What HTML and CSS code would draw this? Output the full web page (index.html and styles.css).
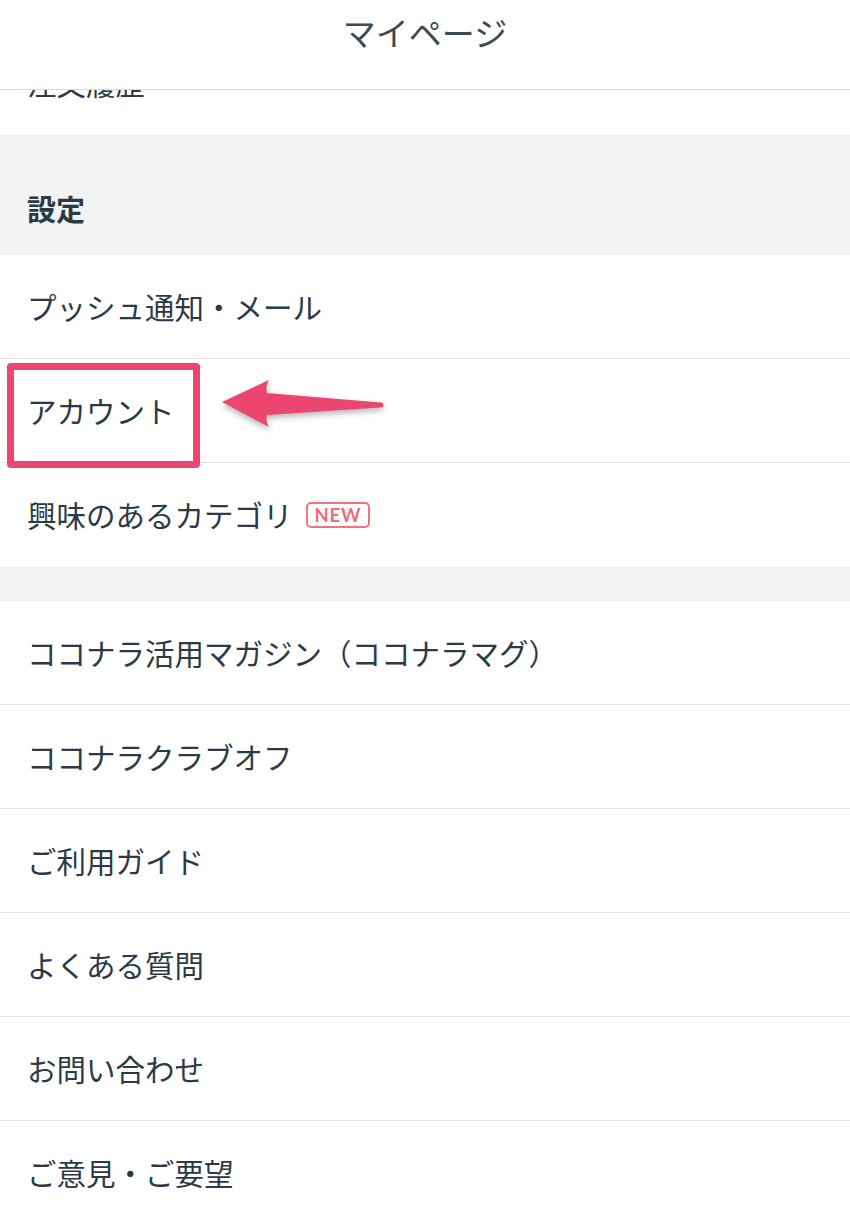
FILE: index.html
```html
<!DOCTYPE html>
<html lang="ja">
<head>
<meta charset="utf-8">
<title>マイページ</title>
<link rel="stylesheet" href="styles.css">
</head>
<body>
<header class="topbar">
  <h1 class="topbar-title">マイページ</h1>
</header>
<main class="page">
  <ul class="menu">
    <li class="menu-item">注文履歴</li>
  </ul>
  <div class="section-head">設定</div>
  <ul class="menu">
    <li class="menu-item">プッシュ通知・メール</li>
    <li class="menu-item is-marked">アカウント
      <span class="mark-box"></span>
      <svg class="mark-arrow" width="180" height="72" viewBox="0 0 180 72" aria-hidden="true">
        <path d="M7,32 L54,10 Q50,17 52,23 Q110,28 166,32.5 A2.3,2.3 0 0 1 166,37.5 Q110,41 52,45 Q50,51 54,57 Z" fill="#ea4670"/>
      </svg>
    </li>
    <li class="menu-item">興味のあるカテゴリ<span class="badge">NEW</span></li>
  </ul>
  <div class="section-gap"></div>
  <ul class="menu">
    <li class="menu-item">ココナラ活用マガジン（ココナラマグ）</li>
    <li class="menu-item">ココナラクラブオフ</li>
    <li class="menu-item">ご利用ガイド</li>
    <li class="menu-item">よくある質問</li>
    <li class="menu-item">お問い合わせ</li>
    <li class="menu-item">ご意見・ご要望</li>
  </ul>
</main>
</body>
</html>
```
FILE: styles.css
```css
* { box-sizing: border-box; }
html, body {
  margin: 0;
  padding: 0;
  background: #ffffff;
}
body {
  font-family: "Noto Sans CJK JP", "Noto Sans", sans-serif;
  color: #2b3a45;
  overflow: hidden;
}
.topbar {
  position: fixed;
  top: 0;
  left: 0;
  right: 0;
  height: 90px;
  background: #ffffff;
  border-bottom: 1px solid #d9dadb;
  z-index: 10;
}
.topbar-title {
  margin: 0;
  padding-top: 11px;
  text-align: center;
  font-size: 33px;
  line-height: 42px;
  font-weight: 400;
  color: #3c4a55;
}
.page {
  padding-top: 31px;
}
.menu {
  list-style: none;
  margin: 0;
  padding: 0;
}
.menu-item {
  position: relative;
  height: 104px;
  display: flex;
  align-items: center;
  padding: 0 27px;
  font-size: 29.5px;
  line-height: 1;
  border-bottom: 1px solid #e2e4e6;
  white-space: nowrap;
}
.menu-item:last-child {
  border-bottom: none;
}
.section-head {
  height: 120px;
  background: #f2f3f5;
  padding: 58px 27px 0;
  font-size: 29px;
  line-height: 30px;
  font-weight: 700;
}
.section-gap {
  height: 34px;
  background: #f2f3f5;
}
.badge {
  display: inline-block;
  margin-left: 13px;
  padding: 0 7px;
  height: 26px;
  line-height: 22px;
  border: 2px solid #f07380;
  border-radius: 5px;
  color: #ef6c7a;
  font-family: "Lato", "Noto Sans", sans-serif;
  font-weight: 700;
  font-size: 18.5px;
  letter-spacing: 0.8px;
}
.mark-box {
  position: absolute;
  left: 7px;
  top: 4px;
  width: 193px;
  height: 105px;
  border: 7px solid #ea4670;
  border-radius: 4px;
}
.mark-arrow {
  position: absolute;
  left: 215px;
  top: 11px;
  filter: drop-shadow(0 3px 3px rgba(0, 0, 0, 0.3));
  overflow: visible;
}
```
